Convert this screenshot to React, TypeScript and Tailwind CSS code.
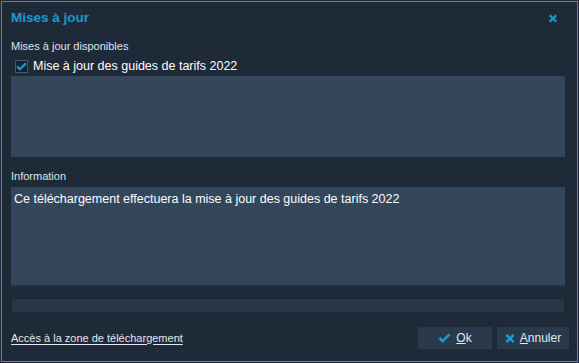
import { useState } from "react";

const FONT = { fontFamily: '"Liberation Sans", Arial, sans-serif' };

function CheckIcon({ className }: { className?: string }) {
  return (
    <svg viewBox="0 0 14 11" className={className} aria-hidden="true">
      <path d="M1.5 5.5 L5 9 L12.5 1.5" fill="none" stroke="currentColor" strokeWidth="2.8" />
    </svg>
  );
}

function CrossIcon({ className }: { className?: string }) {
  return (
    <svg viewBox="0 0 11 11" className={className} aria-hidden="true">
      <path d="M1.5 1.5 L9.5 9.5 M9.5 1.5 L1.5 9.5" fill="none" stroke="currentColor" strokeWidth="2.8" />
    </svg>
  );
}

export default function App() {
  const [checked, setChecked] = useState(true);

  return (
    <div className="h-[363px] w-[579px] bg-[#1f2a38] p-px text-[#dfe5eb]" style={FONT}>
      <div className="flex h-full flex-col border border-[#1a9bd7] pl-[9px] pr-[8px]">
        <div className="flex h-[31px] shrink-0 items-center justify-between pt-[1px]">
          <h1 className="text-[13.5px] font-bold text-[#1a9ad2]">Mises à jour</h1>
          <button className="mr-[11px] text-[#1a9ad2]" aria-label="Fermer">
            <CrossIcon className="h-[9px] w-[10px]" />
          </button>
        </div>

        <p className="mt-[7px] text-[11px] leading-[13px]">Mises à jour disponibles</p>
        <div className="mr-[4px] mt-[4px] flex h-[100px] flex-col bg-[#33465a]">
          <label className="flex h-[19px] shrink-0 items-center bg-[#1f2a38]">
            <span
              onClick={() => setChecked(!checked)}
              className="ml-[4px] flex h-[13px] w-[13px] items-center justify-center border border-[#46586b] bg-[#18222e] text-[#1a9ad2]"
            >
              {checked && <CheckIcon className="h-[9px] w-[11px]" />}
            </span>
            <span className="ml-[5px] text-[12.5px] text-white">Mise à jour des guides de tarifs 2022</span>
          </label>
        </div>

        <p className="mt-[13px] text-[11px] leading-[13px]">Information</p>
        <div className="mr-[4px] mt-[4px] h-[99px] border-b border-[#26364a] bg-[#33465a] px-[3px] pt-[3px] text-[12.5px] text-white">
          Ce téléchargement effectuera la mise à jour des guides de tarifs 2022
        </div>

        <div className="mr-[4px] mt-[12px] h-[15px] border border-[#1b2633] bg-[#293849]" />

        <div className="mt-[14px] flex items-center justify-between">
          <a href="#" className="text-[11px] text-[#e3e8ee] underline underline-offset-2">
            Accès à la zone de téléchargement
          </a>
          <div className="flex gap-[5px]">
            <button className="flex h-[22px] w-[74px] items-center justify-center gap-[5px] bg-[#2a3a4b] text-[12px] text-[#e3e8ee]">
              <CheckIcon className="h-[10px] w-[13px] text-[#1a9ad2]" />
              <span>
                <span className="underline">O</span>k
              </span>
            </button>
            <button className="flex h-[22px] w-[72px] items-center justify-center gap-[5px] bg-[#2a3a4b] text-[12px] text-[#e3e8ee]">
              <CrossIcon className="h-[11px] w-[10px] text-[#1a9ad2]" />
              <span>
                <span className="underline">A</span>nnuler
              </span>
            </button>
          </div>
        </div>
      </div>
    </div>
  );
}
